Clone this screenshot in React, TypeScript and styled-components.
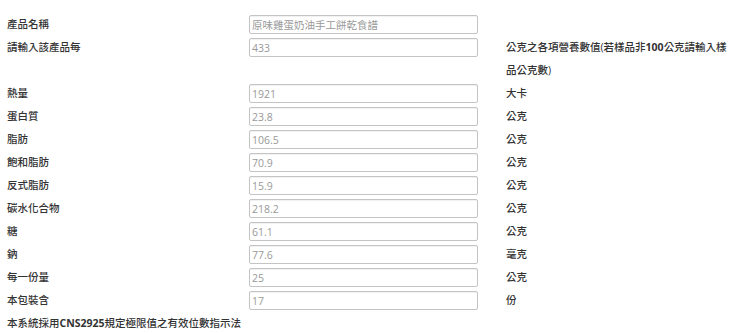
import React from "react";
import styled, { createGlobalStyle } from "styled-components";

const GlobalStyle = createGlobalStyle`
  html, body {
    margin: 0;
    padding: 0;
    background: #fff;
  }
  body {
    font-family: "Open Sans", "Noto Sans CJK TC", sans-serif;
    font-size: 10.5px;
    color: #333;
  }
`;

const Form = styled.div`
  display: grid;
  grid-template-columns: 242px 257px 222px;
  align-items: start;
  padding: 13px 0 0 7px;
  line-height: 23px;
`;

const Label = styled.div`
  white-space: nowrap;
  font-weight: 500;
`;

const Cell = styled.div`
  height: 23px;
  display: flex;
  align-items: center;
`;

const Field = styled.input`
  box-sizing: border-box;
  width: 229px;
  height: 19px;
  margin: 0;
  padding: 0 2px;
  border: 1px solid #c4c4c4;
  border-radius: 2px;
  box-shadow: inset 0 1px 1px rgba(0, 0, 0, 0.06);
  background: #fff;
  font-family: "Open Sans", "Noto Sans CJK TC", sans-serif;
  font-size: 10.5px;
  color: #999;
  outline: none;
`;

const Unit = styled.div`
  font-weight: 500;
`;

const Note = styled.div`
  padding: 0 0 0 7px;
  line-height: 23px;
  white-space: nowrap;
  font-weight: 500;
`;

type Row = { label: string; value: string; unit: React.ReactNode };

const rows: Row[] = [
  { label: "產品名稱", value: "原味雞蛋奶油手工餅乾食譜", unit: "" },
  {
    label: "請輸入該產品每",
    value: "433",
    unit: (
      <>
        公克之各項營養數值(若樣品非<b>100</b>公克請輸入樣品公克數)
      </>
    ),
  },
  { label: "熱量", value: "1921", unit: "大卡" },
  { label: "蛋白質", value: "23.8", unit: "公克" },
  { label: "脂肪", value: "106.5", unit: "公克" },
  { label: "飽和脂肪", value: "70.9", unit: "公克" },
  { label: "反式脂肪", value: "15.9", unit: "公克" },
  { label: "碳水化合物", value: "218.2", unit: "公克" },
  { label: "糖", value: "61.1", unit: "公克" },
  { label: "鈉", value: "77.6", unit: "毫克" },
  { label: "每一份量", value: "25", unit: "公克" },
  { label: "本包裝含", value: "17", unit: "份" },
];

const App = () => (
  <>
    <GlobalStyle />
    <Form>
      {rows.map(r => (
        <React.Fragment key={r.label}>
          <Label>{r.label}</Label>
          <Cell>
            <Field defaultValue={r.value} readOnly />
          </Cell>
          <Unit>{r.unit}</Unit>
        </React.Fragment>
      ))}
    </Form>
    <Note>
      本系統採用<b>CNS2925</b>規定極限值之有效位數指示法
    </Note>
  </>
);

export default App;
